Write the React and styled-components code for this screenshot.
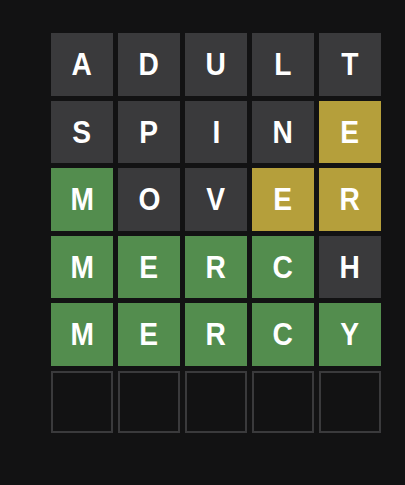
import styled, { createGlobalStyle } from "styled-components"

const GlobalStyle = createGlobalStyle`
  html, body {
    margin: 0;
    padding: 0;
    background: #121213;
  }
`

const Page = styled.div`
  width: 405px;
  height: 485px;
  background: #121213;
  padding: 33px 0 0 51px;
  box-sizing: border-box;
`

const Board = styled.div`
  width: 330px;
  height: 400px;
  display: grid;
  grid-template-rows: repeat(6, 1fr);
  gap: 5px;
`

const Row = styled.div`
  display: grid;
  grid-template-columns: repeat(5, 1fr);
  gap: 5px;
`

const colors = {
  absent: "#3a3a3c",
  present: "#b59f3b",
  correct: "#538d4e",
}

const Tile = styled.div`
  display: flex;
  align-items: center;
  justify-content: center;
  box-sizing: border-box;
  background: ${({ state }) => (state ? colors[state] : "transparent")};
  border: ${({ state }) => (state ? "none" : "2px solid #3a3a3c")};
`

const Letter = styled.span`
  display: inline-block;
  color: #ffffff;
  font-family: "Liberation Sans", Arial, sans-serif;
  font-weight: bold;
  font-size: 32px;
  line-height: 1;
  text-transform: uppercase;
  transform: scaleX(0.88);
`

const guesses = [
  ["adult", "aaaaa"],
  ["spine", "aaaap"],
  ["mover", "caapp"],
  ["merch", "cccca"],
  ["mercy", "ccccc"],
]

const codes = { a: "absent", p: "present", c: "correct" }

function App() {
  const rows = [...guesses, ["     ", null]]
  return (
    <Page>
      <GlobalStyle />
      <Board>
        {rows.map(([word, result], r) => (
          <Row key={r}>
            {word.split("").map((ch, i) => (
              <Tile key={i} state={result ? codes[result[i]] : undefined}>
                <Letter>{ch.trim()}</Letter>
              </Tile>
            ))}
          </Row>
        ))}
      </Board>
    </Page>
  )
}

export default App
